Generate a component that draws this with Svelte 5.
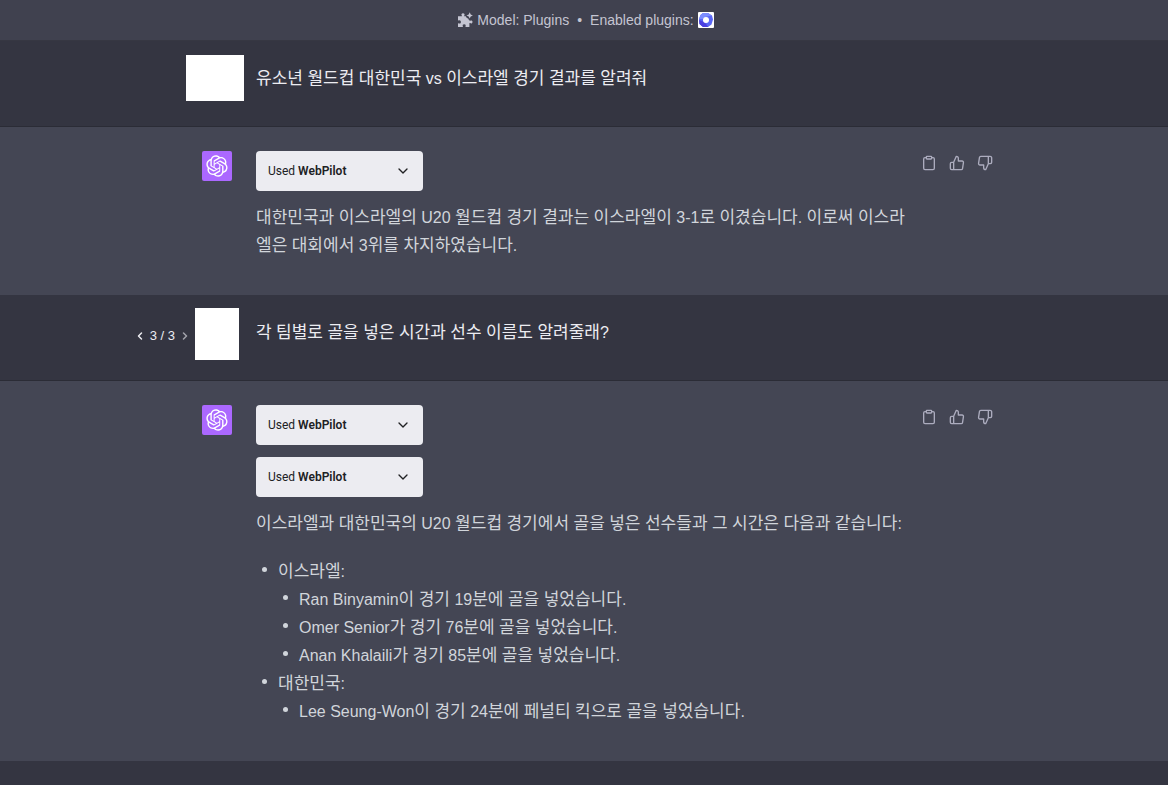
<script>
  const turns = [
    { role: 'user', cover: 'wide', text: '유소년 월드컵 대한민국 vs 이스라엘 경기 결과를 알려줘' },
    {
      role: 'assistant',
      plugins: ['WebPilot'],
      text: '대한민국과 이스라엘의 U20 월드컵 경기 결과는 이스라엘이 3-1로 이겼습니다. 이로써 이스라엘은 대회에서 3위를 차지하였습니다.'
    },
    { role: 'user', cover: 'tall', pager: '3 / 3', text: '각 팀별로 골을 넣은 시간과 선수 이름도 알려줄래?' },
    {
      role: 'assistant',
      plugins: ['WebPilot', 'WebPilot'],
      text: '이스라엘과 대한민국의 U20 월드컵 경기에서 골을 넣은 선수들과 그 시간은 다음과 같습니다:',
      teams: [
        {
          name: '이스라엘:',
          goals: [
            'Ran Binyamin이 경기 19분에 골을 넣었습니다.',
            'Omer Senior가 경기 76분에 골을 넣었습니다.',
            'Anan Khalaili가 경기 85분에 골을 넣었습니다.'
          ]
        },
        { name: '대한민국:', goals: ['Lee Seung-Won이 경기 24분에 페널티 킥으로 골을 넣었습니다.'] }
      ]
    }
  ];

  // Splits text so that Hangul words can be set a size larger than Latin and digits.
  const runs = (text) => text.split(/([가-힣]+)/).filter(Boolean);
  const isHangul = (run) => /^[가-힣]/.test(run);
</script>

{#snippet mixed(text)}{#each runs(text) as run}{#if isHangul(run)}<span class="hangul">{run}</span>{:else}{run}{/if}{/each}{/snippet}

<div class="page">
  <header>
    <svg class="puzzle" viewBox="0 0 16 16" aria-hidden="true">
      <path d="M1 4.300h3.500c.5 0 .6-.4.3-.8C3.900 2.300 4.700 1.200 6 1.200s2.100 1.100 1.300 2.300c-.3.4-.1.8.3.8h1.200c.3 1.300 1.300 1.900 2.400 2.200.3 1 .8 1.700 1.400 2.100.2.300.500.300.8.100 1.200-.6 2.100.1 2.100 1.200s-1.100 2-2.300 1.200c-.4-.3-.8-.1-.8.3V15H8.900c-.4 0-.6-.3-.4-.7.6-1.200 0-2.100-1.300-2.100s-1.900.9-1.300 2.100c.2.4 0 .7-.4.7H1v-3.300c0-.4.3-.6.7-.4 1.200.6 2.200-.2 2.200-1.400S2.900 7.800 1.700 8.500c-.4.200-.7 0-.7-.4z" />
      <path d="M12.700.2l1 2.200 2.200 1-2.200 1-1 2.200-1-2.200-2.200-1 2.200-1z" />
    </svg>
    <span>Model: Plugins</span>
    <span class="dot">•</span>
    <span>Enabled plugins:</span>
    <svg class="plugin" viewBox="0 0 16 16" role="img" aria-label="WebPilot">
      <rect width="16" height="16" rx="1" fill="#fff" />
      <path d="M5 1h5l4 2.500 1 4-1.500 5L10 15H5l-3.500-3L1 7l1.500-4z" fill="#5a66f5" />
      <path d="M5 1h5l3.500 2.500L8 4.800 4.500 7 1 7l1.500-4z" fill="#7b8cff" />
      <path d="M1 8l4 1.500L8 12l2 3H5l-3.500-3z" fill="#4a3fe0" />
      <circle cx="8" cy="8" r="3" fill="#fff" />
    </svg>
  </header>

  <main>
    {#each turns as turn}
      <section class={turn.role}>
        <div class="inner">
          {#if turn.role === 'user'}
            {#if turn.pager}
              <nav class="pager" aria-label="Versions">
                <button aria-label="Previous"><svg viewBox="0 0 24 24"><path d="M15 18l-6-6 6-6" /></svg></button>
                <span>{turn.pager}</span>
                <button aria-label="Next" disabled><svg viewBox="0 0 24 24"><path d="M9 18l6-6-6-6" /></svg></button>
              </nav>
            {/if}
            <div class="avatar"><div class="cover {turn.cover}"></div></div>
            <div class="content"><p>{@render mixed(turn.text)}</p></div>
          {:else}
            <div class="avatar bot">
              <svg viewBox="0 0 41 41" aria-hidden="true">
                <path d="M37.5324 16.8707C37.9808 15.5241 38.1363 14.0974 37.9886 12.6859C37.8409 11.2744 37.3934 9.91076 36.676 8.68622C35.6126 6.83404 33.9882 5.3676 32.0373 4.4985C30.0864 3.62941 27.9098 3.40259 25.8215 3.85078C24.8796 2.7893 23.7219 1.94125 22.4257 1.36341C21.1295 0.785575 19.7249 0.491269 18.3058 0.500197C16.1708 0.495044 14.0893 1.16803 12.3614 2.42214C10.6335 3.67624 9.34853 5.44666 8.6917 7.47815C7.30085 7.76286 5.98686 8.3414 4.8377 9.17505C3.68854 10.0087 2.73073 11.0782 2.02839 12.312C0.956464 14.1591 0.498905 16.2988 0.721698 18.4228C0.944492 20.5467 1.83612 22.5449 3.268 24.1293C2.81966 25.4759 2.66413 26.9026 2.81182 28.3141C2.95951 29.7256 3.40701 31.0892 4.12437 32.3138C5.18791 34.1659 6.8123 35.6322 8.76321 36.5013C10.7141 37.3704 12.8907 37.5973 14.9789 37.1492C15.9208 38.2107 17.0786 39.0587 18.3747 39.6366C19.6709 40.2144 21.0755 40.5087 22.4946 40.4998C24.6307 40.5054 26.7133 39.8321 28.4418 38.5772C30.1704 37.3223 31.4556 35.5506 32.1119 33.5179C33.5027 33.2332 34.8167 32.6547 35.9659 31.821C37.115 30.9874 38.0728 29.9178 38.7752 28.684C39.8458 26.8371 40.3023 24.6979 40.0789 22.5748C39.8556 20.4517 38.9639 18.4544 37.5324 16.8707ZM22.4978 37.8849C20.7443 37.8874 19.0459 37.2733 17.6994 36.1501C17.7601 36.117 17.8666 36.0586 17.936 36.0161L25.9004 31.4156C26.1003 31.3019 26.2663 31.137 26.3813 30.9378C26.4964 30.7386 26.5563 30.5124 26.5549 30.2825V19.0542L29.9213 20.998C29.9389 21.0068 29.9541 21.0198 29.9656 21.0359C29.977 21.052 29.9842 21.0707 29.9867 21.0902V30.3889C29.9842 32.375 29.1946 34.2791 27.7909 35.6841C26.3872 37.0892 24.4838 37.8806 22.4978 37.8849ZM6.39227 31.0064C5.51397 29.4888 5.19742 27.7107 5.49804 25.9832C5.55718 26.0187 5.66048 26.0818 5.73461 26.1244L13.699 30.7248C13.8975 30.8408 14.1233 30.902 14.3532 30.902C14.583 30.902 14.8088 30.8408 15.0073 30.7248L24.731 25.1103V28.9979C24.7321 29.0177 24.7283 29.0376 24.7199 29.0556C24.7115 29.0736 24.6988 29.0893 24.6829 29.1012L16.6317 33.7497C14.9096 34.7416 12.8643 35.0097 10.9447 34.4954C9.02506 33.9811 7.38785 32.7263 6.39227 31.0064ZM4.29707 13.6194C5.17156 12.0998 6.55279 10.9364 8.19885 10.3327C8.19885 10.4013 8.19491 10.5228 8.19491 10.6071V19.808C8.19351 20.0378 8.25334 20.2638 8.36823 20.4629C8.48312 20.6619 8.64893 20.8267 8.84863 20.9404L18.5723 26.5542L15.206 28.4979C15.1894 28.5089 15.1703 28.5155 15.1505 28.5173C15.1307 28.5191 15.1107 28.516 15.0924 28.5082L7.04046 23.8557C5.32135 22.8601 4.06716 21.2235 3.55289 19.3046C3.03862 17.3858 3.30624 15.3413 4.29707 13.6194ZM31.955 20.0556L22.2312 14.4411L25.5976 12.4981C25.6142 12.4872 25.6333 12.4805 25.6531 12.4787C25.6729 12.4769 25.6928 12.4801 25.7111 12.4879L33.7631 17.1364C34.9967 17.849 36.0017 18.8982 36.6606 20.1613C37.3194 21.4244 37.6047 22.849 37.4832 24.2684C37.3617 25.6878 36.8382 27.0432 35.9743 28.1759C35.1103 29.3086 33.9415 30.1717 32.6047 30.6641C32.6047 30.5947 32.6047 30.4733 32.6047 30.3889V21.188C32.6066 20.9586 32.5474 20.7328 32.4332 20.5338C32.319 20.3348 32.154 20.1698 31.955 20.0556ZM35.3055 15.0128C35.2464 14.9765 35.1431 14.9142 35.069 14.8717L27.1045 10.2712C26.906 10.1554 26.6803 10.0943 26.4504 10.0943C26.2206 10.0943 25.9948 10.1554 25.7963 10.2712L16.0726 15.8858V11.9982C16.0715 11.9783 16.0753 11.9585 16.0837 11.9405C16.0921 11.9225 16.1048 11.9068 16.1207 11.8949L24.1719 7.25025C25.4053 6.53903 26.8158 6.19376 28.2383 6.25482C29.6608 6.31589 31.0364 6.78077 32.2044 7.59508C33.3723 8.40939 34.2842 9.53945 34.8334 10.8531C35.3826 12.1667 35.5464 13.6095 35.3055 15.0128ZM14.2424 21.9419L10.8752 19.9981C10.8576 19.9893 10.8423 19.9763 10.8309 19.9602C10.8195 19.9441 10.8122 19.9254 10.8098 19.9058V10.6071C10.8107 9.18295 11.2173 7.78848 11.9819 6.58696C12.7466 5.38544 13.8377 4.42659 15.1275 3.82264C16.4173 3.21869 17.8524 2.99464 19.2649 3.1767C20.6775 3.35876 22.0089 3.93941 23.1034 4.85067C23.0427 4.88379 22.937 4.94215 22.8668 4.98473L14.9024 9.58517C14.7025 9.69878 14.5366 9.86356 14.4215 10.0626C14.3065 10.2616 14.2466 10.4877 14.2479 10.7175L14.2424 21.9419ZM16.071 17.9991L20.4018 15.4978L24.7325 17.9975V22.9985L20.4018 25.4983L16.071 22.9985V17.9991Z" />
              </svg>
            </div>
            <div class="content">
              {#each turn.plugins as plugin}
                <button class="used">
                  <span>Used <b>{plugin}</b></span>
                  <svg viewBox="0 0 24 24" aria-hidden="true"><path d="M6 9l6 6 6-6" /></svg>
                </button>
              {/each}
              <div class="answer">
                <p>{@render mixed(turn.text)}</p>
                {#if turn.teams}
                  <ul>
                    {#each turn.teams as team}
                      <li>
                        {@render mixed(team.name)}
                        <ul>
                          {#each team.goals as goal}<li>{@render mixed(goal)}</li>{/each}
                        </ul>
                      </li>
                    {/each}
                  </ul>
                {/if}
              </div>
            </div>
            <div class="actions">
              <button aria-label="Copy">
                <svg viewBox="0 0 24 24"><path d="M16 4h2a2 2 0 0 1 2 2v14a2 2 0 0 1-2 2H6a2 2 0 0 1-2-2V6a2 2 0 0 1 2-2h2" /><rect x="8" y="2" width="8" height="4" rx="1" /></svg>
              </button>
              <button aria-label="Good response">
                <svg viewBox="0 0 24 24"><path d="M14 9V5a3 3 0 0 0-3-3l-4 9v11h11.280a2 2 0 0 0 2-1.700l1.380-9a2 2 0 0 0-2-2.300zM7 22H4a2 2 0 0 1-2-2v-7a2 2 0 0 1 2-2h3" /></svg>
              </button>
              <button aria-label="Bad response">
                <svg viewBox="0 0 24 24"><path d="M10 15v4a3 3 0 0 0 3 3l4-9V2H5.720a2 2 0 0 0-2 1.700l-1.380 9a2 2 0 0 0 2 2.300zM17 2h2.670A2.310 2.310 0 0 1 22 4v7a2.310 2.310 0 0 1-2.330 2H17" /></svg>
              </button>
            </div>
          {/if}
        </div>
      </section>
    {/each}
  </main>
</div>

<style>
  :global(body) {
    margin: 0;
    background: #343541;
  }
  .page {
    font-family: 'Liberation Sans', 'Noto Sans CJK KR', sans-serif;
    color: #d1d5db;
  }
  button {
    margin: 0;
    border: 0;
    background: none;
    font: inherit;
    color: inherit;
    cursor: pointer;
  }
  header {
    display: flex;
    align-items: center;
    justify-content: center;
    gap: 4px;
    height: 40px;
    padding-left: 3px;
    border-bottom: 1px solid #363742;
    background: #40414f;
    color: #c5c5d2;
    font-size: 14px;
    line-height: 20px;
  }
  header svg {
    width: 16px;
    height: 16px;
  }
  .puzzle {
    fill: currentColor;
  }
  .dot {
    padding: 0 4px;
  }
  section {
    border-bottom: 1px solid #2b2c36;
  }
  .user {
    background: #343541;
    color: #ececf1;
  }
  .assistant {
    background: #444654;
    border-color: #444654;
  }
  .inner {
    position: relative;
    display: flex;
    box-sizing: border-box;
    max-width: 764px;
    margin: 0 auto;
    padding: 24px 0 34px;
  }
  .user .inner {
    padding-bottom: 33px;
  }
  .avatar {
    position: relative;
    flex: none;
    width: 30px;
    margin-right: 24px;
  }
  .bot {
    display: flex;
    align-items: center;
    justify-content: center;
    height: 30px;
    border-radius: 2px;
    background: #ab68ff;
  }
  .bot svg {
    width: 22px;
    height: 22px;
    fill: #fff;
  }
  .cover {
    position: absolute;
    background: #fff;
  }
  .wide {
    top: -10px;
    left: -16px;
    width: 58px;
    height: 46px;
  }
  .tall {
    top: -11px;
    left: -7px;
    width: 44px;
    height: 52px;
  }
  .pager {
    position: absolute;
    top: 31px;
    right: 100%;
    display: flex;
    align-items: center;
    gap: 4px;
    margin-right: 11px;
    font-size: 13px;
    line-height: 20px;
    white-space: nowrap;
  }
  .pager button {
    display: flex;
    padding: 0;
  }
  .pager button:disabled {
    opacity: 0.6;
  }
  .pager svg {
    width: 12px;
    height: 12px;
  }
  .pager svg,
  .used svg,
  .actions svg {
    fill: none;
    stroke: currentColor;
    stroke-width: 2;
    stroke-linecap: round;
    stroke-linejoin: round;
  }
  .pager svg {
    stroke-width: 3;
  }
  .content {
    flex: 0 1 650px;
    min-width: 0;
    font-size: 16px;
    line-height: 28px;
  }
  .answer {
    padding-top: 1px;
  }
  .hangul {
    font-size: 17px;
  }
  p {
    margin: 0;
    word-break: break-all;
  }
  .used {
    display: flex;
    align-items: center;
    justify-content: space-between;
    width: 167px;
    height: 40px;
    margin-bottom: 12px;
    padding: 0 12px;
    border-radius: 4px;
    background: #ececf1;
    color: #202123;
    font-family: Roboto, sans-serif;
    font-size: 12px;
    line-height: 20px;
  }
  .used b {
    font-weight: 600;
  }
  .used svg {
    width: 16px;
    height: 16px;
  }
  ul {
    margin: 20px 0 0;
    padding: 0 0 0 22px;
    list-style: none;
  }
  ul ul {
    margin: 0;
    padding-left: 21px;
  }
  li {
    position: relative;
  }
  li::before {
    content: '';
    position: absolute;
    top: 9px;
    left: -16px;
    width: 5px;
    height: 5px;
    border-radius: 50%;
    background: currentColor;
  }
  .actions {
    display: flex;
    flex: none;
    gap: 4px;
    align-self: flex-start;
    margin: 0 -31px 0 11px;
    color: #acacbe;
  }
  .actions button {
    display: flex;
    padding: 4px;
  }
  .actions svg {
    width: 16px;
    height: 16px;
  }
</style>
